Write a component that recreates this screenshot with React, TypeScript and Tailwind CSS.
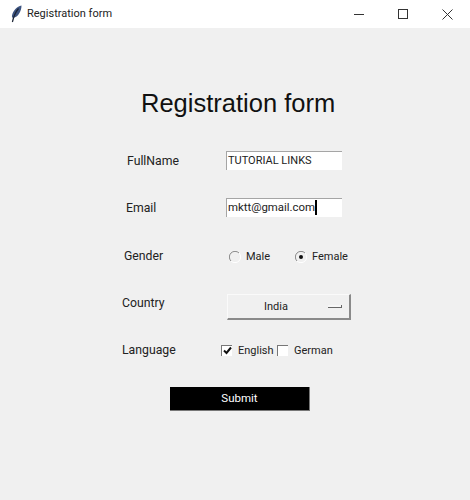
import React from "react";

const sans = { fontFamily: 'Roboto, "Liberation Sans", sans-serif' };

const Feather = () => (
  <svg width="14" height="18" viewBox="0 0 14 18">
    <path d="M12.500 .5C8 1.500 4 5.500 3 10.500c-.3 1.500.3 2.500 1.500 2.300C9 12 12.500 6.500 12.500 .5Z" fill="#3d5480" />
    <path d="M9.500 3.500C7 6.500 5 10 3.400 17" stroke="#1b2435" strokeWidth="1.200" fill="none" />
  </svg>
);

const Radio = ({ checked }: { checked?: boolean }) => (
  <svg width="12" height="12" viewBox="0 0 12 12" className="shrink-0">
    <path d="M2 10A5.600 5.600 0 0 1 10 2" stroke="#8a8a8a" strokeWidth="1" fill="none" />
    <path d="M10 2A5.600 5.600 0 0 1 2 10" stroke="#ffffff" strokeWidth="1" fill="none" />
    {checked && <circle cx="6" cy="6" r="2" fill="#111" />}
  </svg>
);

const Check = ({ checked }: { checked?: boolean }) => (
  <span className="w-[11px] h-[11px] shrink-0 bg-white border-t border-l border-[#777] flex items-center justify-center">
    {checked && (
      <svg width="9" height="9" viewBox="0 0 9 9">
        <path d="M1 4.500 3.500 7 8 1.500" stroke="#111" strokeWidth="2" fill="none" />
      </svg>
    )}
  </span>
);

export default function App() {
  return (
    <div className="w-[470px] h-[500px] bg-[#f0f0f0] flex flex-col overflow-hidden" style={sans}>
      {/* Title bar */}
      <div className="h-[28px] bg-white flex items-center shrink-0">
        <div className="ml-[6px] w-[20px] flex justify-center"><Feather /></div>
        <span className="text-[11px] text-[#222] ml-[1px]">Registration form</span>
        <div className="ml-auto mr-[1px] flex items-center text-[#333]">
          <div className="w-[44px] h-[28px] flex items-center justify-center">
            <svg width="10" height="10" viewBox="0 0 10 10"><path d="M0 5.500H10" stroke="#333" /></svg>
          </div>
          <div className="w-[44px] h-[28px] flex items-center justify-center">
            <svg width="10" height="10" viewBox="0 0 10 10"><rect x=".5" y=".5" width="9" height="9" fill="none" stroke="#333" /></svg>
          </div>
          <div className="w-[44px] h-[28px] flex items-center justify-center">
            <svg width="11" height="11" viewBox="0 0 11 11"><path d="M.5.5 10.500 10.500M10.500.5.500 10.500" stroke="#333" /></svg>
          </div>
        </div>
      </div>

      <h1 className="mt-[59px] ml-[141px] text-[25.5px] leading-[32px] text-[#111] font-normal" style={{ fontFamily: '"Liberation Sans", sans-serif' }}>
        Registration form
      </h1>

      {/* FullName */}
      <div className="mt-[31px] ml-[127px] flex items-center h-[20px] text-[12.250px] text-[#222]">
        <span className="w-[99px] mt-[2px]">FullName</span>
        <div className="w-[116px] h-[19px] bg-white border-t border-l border-[#a5a5a5] pl-[1px] flex items-center text-[11px] leading-none">
          TUTORIAL LINKS
        </div>
      </div>

      {/* Email */}
      <div className="mt-[27px] ml-[126px] flex items-center h-[20px] text-[12.250px] text-[#222]">
        <span className="w-[100px] mt-[3px]">Email</span>
        <div className="w-[116px] h-[19px] bg-white border-t border-l border-[#a5a5a5] pl-[1px] flex items-center text-[11.400px] leading-none">
          <span>mktt@gmail.com</span>
          <span className="w-[2px] h-[15px] bg-black" />
        </div>
      </div>

      {/* Gender */}
      <div className="mt-[30px] ml-[124px] flex items-center h-[20px] text-[12.250px] text-[#222]">
        <span className="w-[105px] -mt-[1px]">Gender</span>
        <Radio />
        <span className="ml-[5px] w-[49px] mt-[1px] text-[11px]">Male</span>
        <Radio checked />
        <span className="ml-[5px] mt-[1px] text-[11px]">Female</span>
      </div>

      {/* Country */}
      <div className="mt-[27px] ml-[122px] flex items-center h-[26px] text-[12.250px] text-[#222]">
        <span className="w-[105px] -mt-[7px]">Country</span>
        <div className="relative w-[124px] h-[26px] bg-[#f0f0f0] border-t border-l border-t-[#fafafa] border-l-[#fafafa] border-r-2 border-b-2 border-r-[#8a8a8a] border-b-[#8a8a8a] flex items-center justify-center pr-[25px] pt-[2px] text-[11px]">
          India
          <span className="absolute right-[7px] top-[10px] w-[14px] h-[3px] border-b border-r border-[#666] bg-[#f6f6f6]" />
        </div>
      </div>

      {/* Language */}
      <div className="mt-[20px] ml-[122px] flex items-center h-[20px] text-[12.250px] text-[#222]">
        <span className="w-[99px]">Language</span>
        <Check checked />
        <span className="ml-[6px] w-[39px] mt-[2px] text-[11px]">English</span>
        <Check />
        <span className="ml-[6px] mt-[2px] text-[11px]">German</span>
      </div>

      {/* Submit */}
      <button className="mt-[27px] ml-[170px] w-[140px] h-[24px] bg-black border-b border-r border-[#777] text-white text-[11.500px] leading-none pt-[1px]">
        Submit
      </button>
    </div>
  );
}
